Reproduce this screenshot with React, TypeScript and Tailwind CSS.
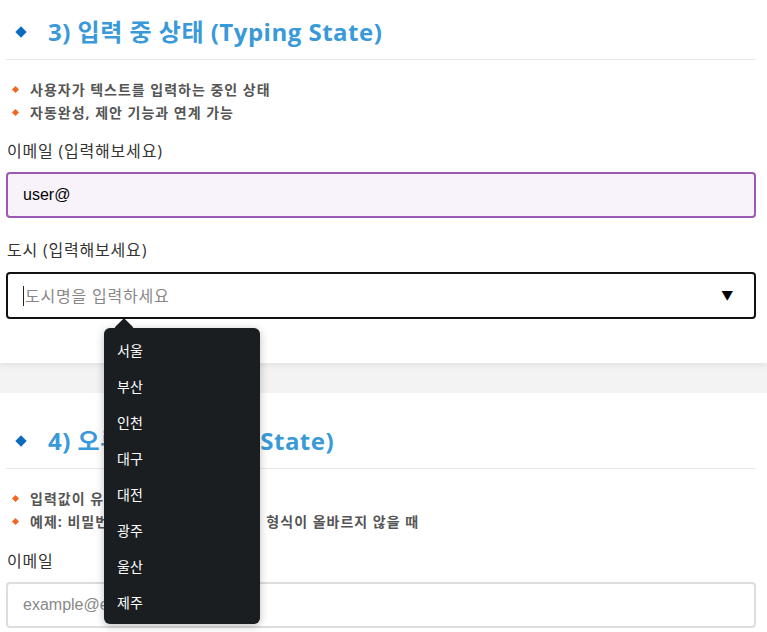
const cities = ['서울', '부산', '인천', '대구', '대전', '광주', '울산', '제주'];

const font = { fontFamily: '"Open Sans", "Noto Sans CJK KR", sans-serif' };
const arial = { fontFamily: '"Liberation Sans", Arial, "Noto Sans CJK KR", sans-serif' };

function Heading({ children }: { children: React.ReactNode }) {
  return (
    <div className="border-b border-[#e8e8e8] pb-[9px]">
      <h2 className="flex items-center h-[36px] text-[24px] tracking-[0.5px] font-bold text-[#3a9ad9] leading-none">
        <span className="w-[8px] h-[8px] bg-[#0b6bbf] rotate-45 ml-[11px] mr-[23px] shrink-0" />
        {children}
      </h2>
    </div>
  );
}

function Bullets({ items }: { items: string[] }) {
  return (
    <ul className="mt-[18px]">
      {items.map((t) => (
        <li key={t} className="flex items-center h-[23px] text-[14px] tracking-[1px] font-bold text-[#555]">
          <span className="w-[5px] h-[5px] bg-[#f46524] rotate-45 ml-[7px] mr-[12px] shrink-0" />
          {t}
        </li>
      ))}
    </ul>
  );
}

export default function App() {
  return (
    <div className="min-h-screen bg-[#f3f3f3] overflow-hidden" style={font}>
      {/* Typing state */}
      <section className="bg-white pl-[6px] pr-[11px] pt-[14px] pb-[44px] shadow-[0_2px_6px_rgba(0,0,0,0.08)]">
        <Heading>3) 입력 중 상태 (Typing State)</Heading>
        <Bullets items={['사용자가 텍스트를 입력하는 중인 상태', '자동완성, 제안 기능과 연계 가능']} />

        <label className="block mt-[15px] text-[16px] tracking-[0.8px] text-[#333] leading-[24px] pl-[1px]">
          이메일 (입력해보세요)
        </label>
        <div
          className="mt-[9px] h-[46px] border-2 border-[#9b59b6] bg-[#f8f3fb] rounded-[4px] flex items-center px-[15px] text-[16px] text-black"
          style={arial}
        >
          user@
        </div>

        <label className="block mt-[20px] text-[16px] tracking-[0.8px] text-[#333] leading-[24px] pl-[1px]">
          도시 (입력해보세요)
        </label>
        <div className="relative mt-[10px]">
          <div className="h-[47px] border-2 border-[#111] rounded-[4px] flex items-center pl-[15px] pr-[20px] text-[16px] tracking-[0.8px] text-[#888]">
            <span className="w-px h-[20px] bg-[#222] mr-px" />
            <span className="flex-1">도시명을 입력하세요</span>
            <span className="text-[12px] text-black">▼</span>
          </div>

          {/* suggestion dropdown */}
          <div className="absolute left-[98px] top-[56px] w-[156px] z-10">
            <div className="absolute left-[13px] -top-[7px] w-[14px] h-[14px] bg-[#1a1e21] rotate-45 rounded-[2px]" />
            <ul className="relative bg-[#1a1e21] rounded-[6px] py-[4px] shadow-[0_2px_8px_rgba(0,0,0,0.25)]">
              {cities.map((c) => (
                <li key={c} className="h-[36px] flex items-center px-[13px] text-[14px] text-white">
                  {c}
                </li>
              ))}
            </ul>
          </div>
        </div>
      </section>

      {/* Error state */}
      <section className="bg-white mt-[30px] pl-[6px] pr-[11px] pt-[30px] pb-[20px]">
        <Heading>4) 오류 상태 (Error State)</Heading>
        <Bullets items={['입력값이 유효하지 않은 상태', '예제: 비밀번호가 너무 짧거나 이메일 형식이 올바르지 않을 때']} />

        <label className="block mt-[16px] text-[16px] tracking-[0.8px] text-[#333] leading-[24px] pl-[1px]">이메일</label>
        <div
          className="mt-[9px] h-[46px] border-2 border-[#ddd] rounded-[4px] flex items-center px-[15px] text-[16px] text-[#888]"
          style={arial}
        >
          example@email.com
        </div>
      </section>
    </div>
  );
}
